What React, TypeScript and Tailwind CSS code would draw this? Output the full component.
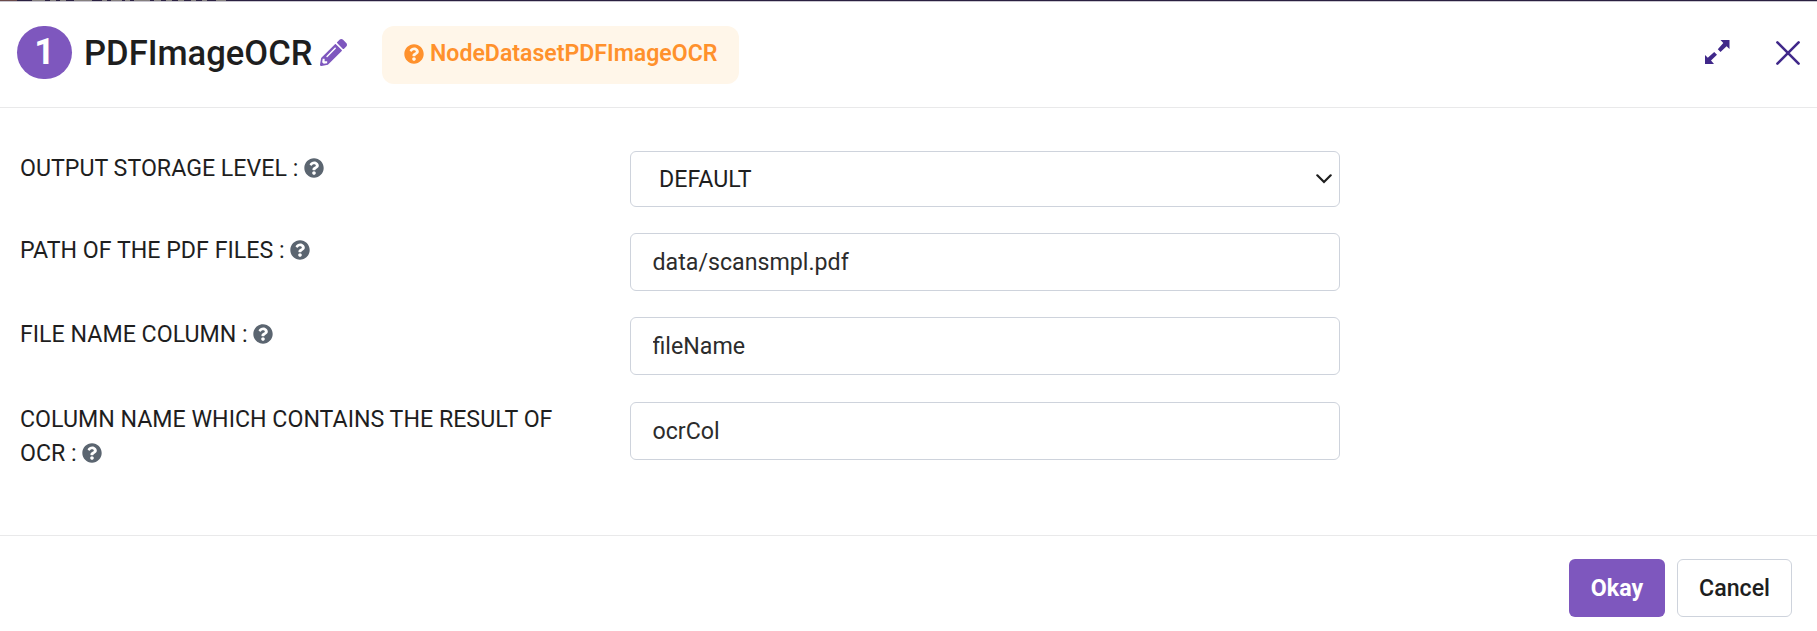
import type { ReactNode } from "react";
import { FaQuestionCircle, FaPencilAlt } from "react-icons/fa";

function Row({ label, className, children }: { label: string; className: string; children: ReactNode }) {
  return (
    <div className={`flex items-start ${className}`}>
      <div className="w-[610px] pr-[50px] text-[23.2px] leading-[34px]">
        {label}{" "}
        <FaQuestionCircle className="inline-block size-5 align-[-2px] text-[#5b6570]" />
      </div>
      {children}
    </div>
  );
}

function TextField({ value }: { value: string }) {
  return (
    <input
      defaultValue={value}
      className="h-[58px] w-[710px] rounded-[6px] border border-[#ced3dc] bg-white pl-[21.5px] text-[23.2px] text-[#2c2c2c] outline-none"
    />
  );
}

export default function App() {
  return (
    <div className="flex h-[631px] w-[1817px] flex-col bg-white font-[Roboto,sans-serif] text-[#1e1e1e]">
      <div className="flex h-px shrink-0 bg-[#2a2040]">
        <div className="w-[17px] bg-[#6b4a4a]" />
        <div className="ml-[15px] w-[13px] bg-[#85807f]" />
        <div className="ml-[5px] w-[6px] bg-[#85807f]" />
        <div className="ml-[4px] w-[6px] bg-[#85807f]" />
        <div className="ml-[8px] w-[18px] bg-[#85807f]" />
        <div className="ml-[10px] w-[5px] bg-[#85807f]" />
        <div className="ml-[4px] w-[11px] bg-[#85807f]" />
        <div className="ml-[3px] w-[5px] bg-[#85807f]" />
        <div className="ml-[4px] w-[16px] bg-[#85807f]" />
        <div className="ml-[4px] w-[7px] bg-[#85807f]" />
        <div className="ml-[5px] w-[6px] bg-[#85807f]" />
        <div className="ml-[6px] w-[6px] bg-[#85807f]" />
        <div className="ml-[7px] w-[5px] bg-[#85807f]" />
        <div className="ml-[6px] w-[5px] bg-[#85807f]" />
        <div className="ml-[9px] w-[10px] bg-[#85807f]" />
      </div>
      <div className="h-px shrink-0 bg-[#cac7d0]" />

      <header className="flex h-[106px] shrink-0 items-start border-b border-[#e9e9ea] pt-6">
        <div className="ml-[17px] flex h-[53px] w-[55px] items-center justify-center rounded-full bg-[#7e57be] text-[36px] font-bold leading-none text-white">
          <span className="-mt-[2px]">1</span>
        </div>
        <h1 className="ml-3 mt-[5px] w-[230px] whitespace-nowrap text-[34.6px] font-medium leading-[44px]">PDFImageOCR</h1>
        <FaPencilAlt className="ml-[6px] mt-[13px] size-[27px] text-[#7e57be]" />
        <div className="ml-[35px] flex h-[58px] w-[357px] items-center rounded-[12px] bg-[#fff6e9] pl-[22px] text-[#ff912c]">
          <FaQuestionCircle className="mt-[-2px] size-5" />
          <span className="-mt-px ml-[6px] text-[23.1px] font-semibold">NodeDatasetPDFImageOCR</span>
        </div>
        <svg className="ml-auto mr-[46px] mt-[14px]" width="25" height="24" viewBox="0 0 25 24" fill="#40288a">
          <path d="M15.5 0H24.5V9L21.6 6.2L15.5 12L12.8 9.2L18.3 3Z" />
          <path d="M9 24H0V15L2.8 17.8L9.2 12L12 14.8L6 20.5Z" />
        </svg>
        <svg className="mr-[17px] mt-[15px]" width="24" height="24" viewBox="0 0 24 24" fill="none" stroke="#40288a" strokeWidth="2.6" strokeLinecap="round">
          <path d="M1.4 1.4L22.6 22.6M22.6 1.4L1.4 22.6" />
        </svg>
      </header>

      <main className="flex h-[428px] shrink-0 flex-col border-b border-[#e9e9ea] pl-[20px]">
        <Row label="OUTPUT STORAGE LEVEL :" className="mt-[43px]">
          <div className="flex h-14 w-[710px] items-center justify-between rounded-[6px] border border-[#ced3dc] pl-[28px] pr-[7px] text-[23.2px]">
            <span className="mt-px">DEFAULT</span>
            <svg width="16" height="10" viewBox="0 0 16 10" fill="none" stroke="#1e1e1e" strokeWidth="2.2" strokeLinecap="round">
              <path d="M1.3 1.3L8 8L14.7 1.3" />
            </svg>
          </div>
        </Row>
        <Row label="PATH OF THE PDF FILES :" className="mt-[26px]">
          <TextField value="data/scansmpl.pdf" />
        </Row>
        <Row label="FILE NAME COLUMN :" className="mt-[26px]">
          <TextField value="fileName" />
        </Row>
        <Row label="COLUMN NAME WHICH CONTAINS THE RESULT OF OCR :" className="mt-[27px]">
          <TextField value="ocrCol" />
        </Row>
      </main>

      <footer className="flex justify-end gap-3 pr-[25px] pt-[23px] text-[23.2px]">
        <button className="h-[58px] w-24 rounded-[6px] bg-[#7e57be] font-bold text-white">Okay</button>
        <button className="h-[58px] w-[115px] rounded-[6px] border border-[#ced3dc] font-medium">Cancel</button>
      </footer>
    </div>
  );
}
